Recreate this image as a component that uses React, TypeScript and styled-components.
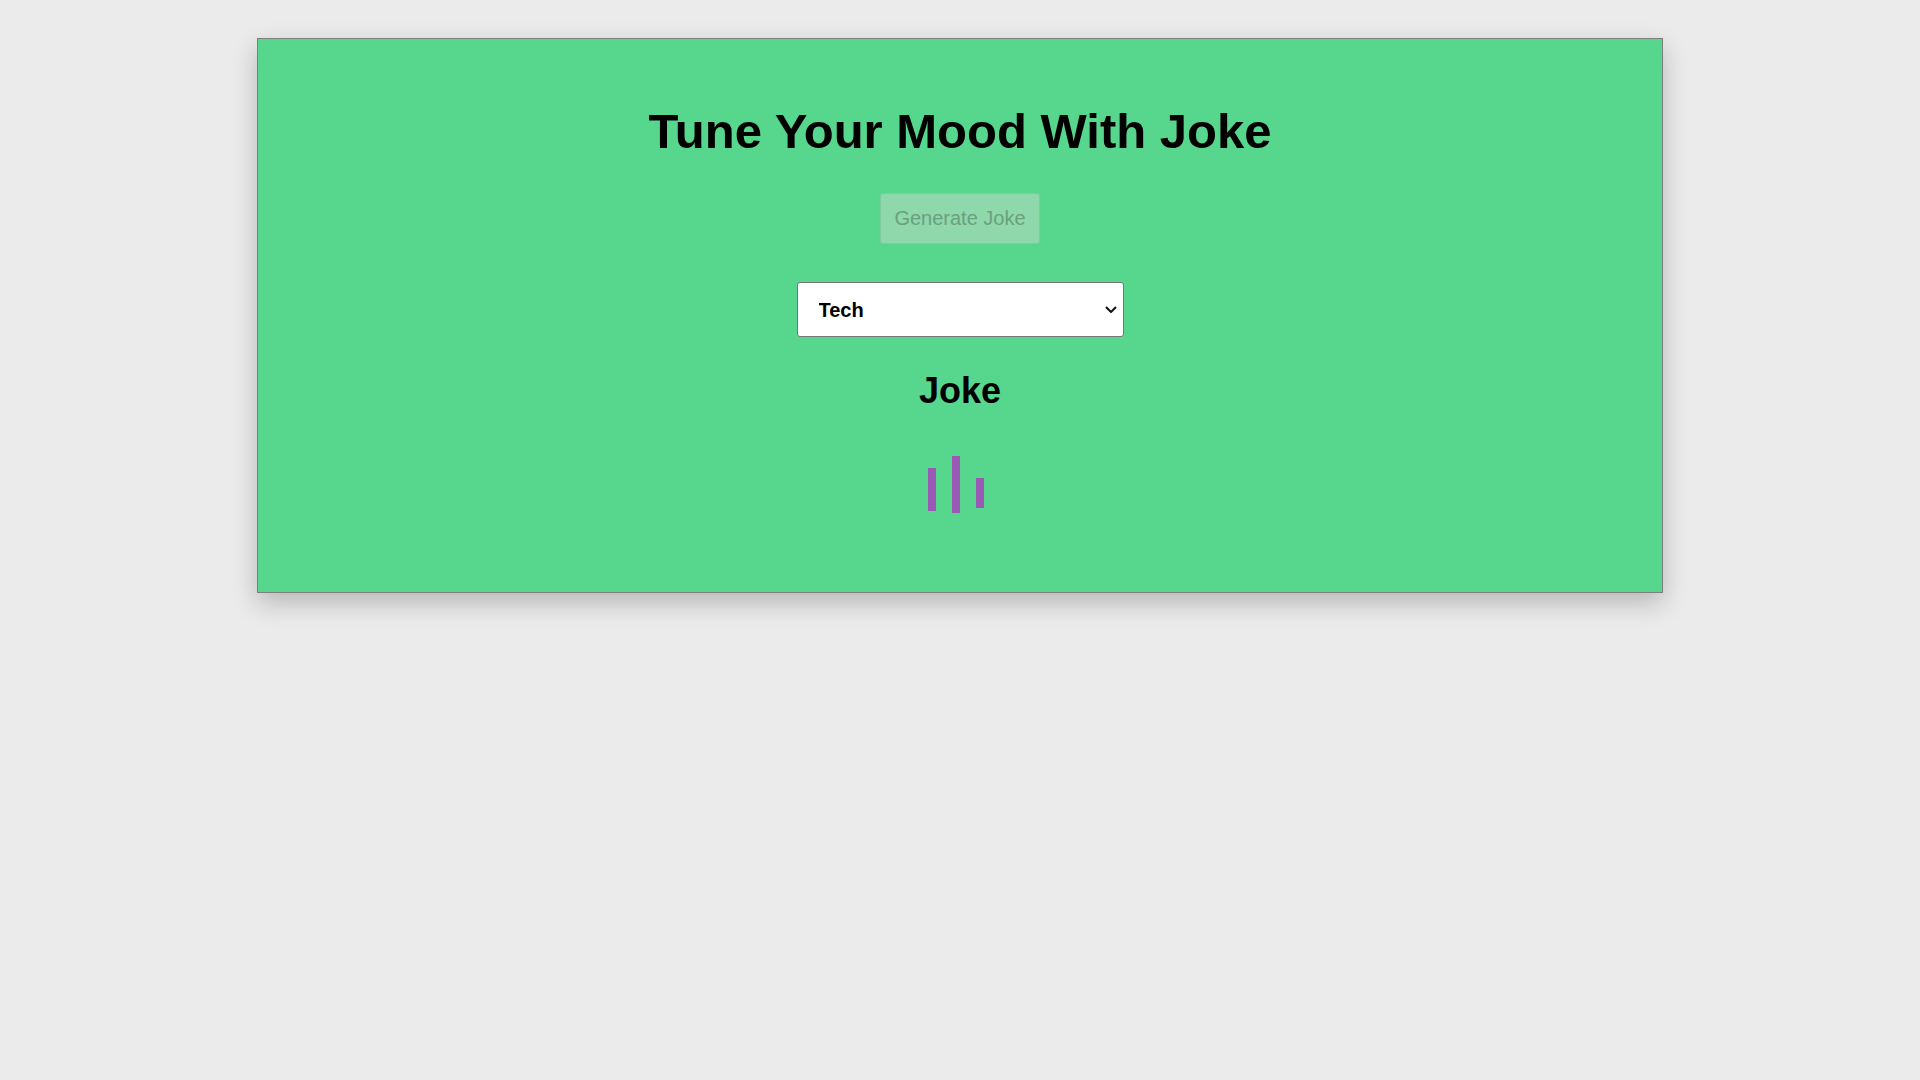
import React from "react";
import styled, { createGlobalStyle } from "styled-components";

const GlobalStyle = createGlobalStyle`
  html, body {
    margin: 0;
    padding: 0;
    background: #ebebeb;
    font-family: "Liberation Sans", Arial, sans-serif;
  }
`;

const Page = styled.div`
  display: flex;
  justify-content: center;
  padding-top: 38px;
  min-height: 1080px;
  box-sizing: border-box;
`;

const Card = styled.main`
  width: 1406px;
  height: 555px;
  box-sizing: border-box;
  background: #57d68d;
  border: 1px solid #7f7f7f;
  box-shadow: 0 10px 24px rgba(0, 0, 0, 0.22);
  display: flex;
  flex-direction: column;
  align-items: center;
  padding-top: 64px;
`;

const Title = styled.h1`
  margin: 0;
  font-size: 49px;
  line-height: 56px;
  font-weight: 700;
  color: #000;
`;

const Button = styled.button`
  margin-top: 34px;
  width: 160px;
  height: 51px;
  box-sizing: border-box;
  background: #8fd8ab;
  border: 1px solid #7ecb9b;
  border-radius: 3px;
  color: #6aa07f;
  font-family: "Liberation Sans", Arial, sans-serif;
  font-size: 20px;
  padding: 0;
  cursor: not-allowed;
`;

const SelectWrap = styled.div`
  position: relative;
  margin-top: 38px;
  width: 327px;
  height: 55px;
`;

const Select = styled.select`
  appearance: none;
  -webkit-appearance: none;
  width: 100%;
  height: 100%;
  box-sizing: border-box;
  background: #fff;
  border: 1px solid #767676;
  border-radius: 3px;
  padding: 0 30px 0 21px;
  font-family: "Liberation Sans", Arial, sans-serif;
  font-size: 20px;
  font-weight: 700;
  color: #000;
`;

const Chevron = styled.svg`
  position: absolute;
  right: 7px;
  top: 24px;
  width: 12px;
  height: 7px;
  pointer-events: none;
`;

const Heading = styled.h2`
  margin: 33px 0 0;
  font-size: 36px;
  line-height: 41px;
  font-weight: 700;
  color: #000;
`;

const Loader = styled.div`
  margin-top: 45px;
  margin-right: 9px;
  height: 57px;
  display: flex;
  gap: 16px;
  align-items: flex-start;
`;

const Bar = styled.span<{ $top: number; $h: number }>`
  display: block;
  width: 8px;
  margin-top: ${(p) => p.$top}px;
  height: ${(p) => p.$h}px;
  background: #9b59b6;
`;

export default function App() {
  return (
    <>
      <GlobalStyle />
      <Page>
        <Card>
          <Title>Tune Your Mood With Joke</Title>
          <Button disabled>Generate Joke</Button>
          <SelectWrap>
            <Select defaultValue="tech">
              <option value="tech">Tech</option>
              <option value="general">General</option>
              <option value="programming">Programming</option>
            </Select>
            <Chevron viewBox="0 0 12 7" fill="none">
              <path d="M1 1 L6 6 L11 1" stroke="#111" strokeWidth="2" />
            </Chevron>
          </SelectWrap>
          <Heading>Joke</Heading>
          <Loader>
            <Bar $top={12} $h={43} />
            <Bar $top={0} $h={57} />
            <Bar $top={22} $h={30} />
          </Loader>
        </Card>
      </Page>
    </>
  );
}
